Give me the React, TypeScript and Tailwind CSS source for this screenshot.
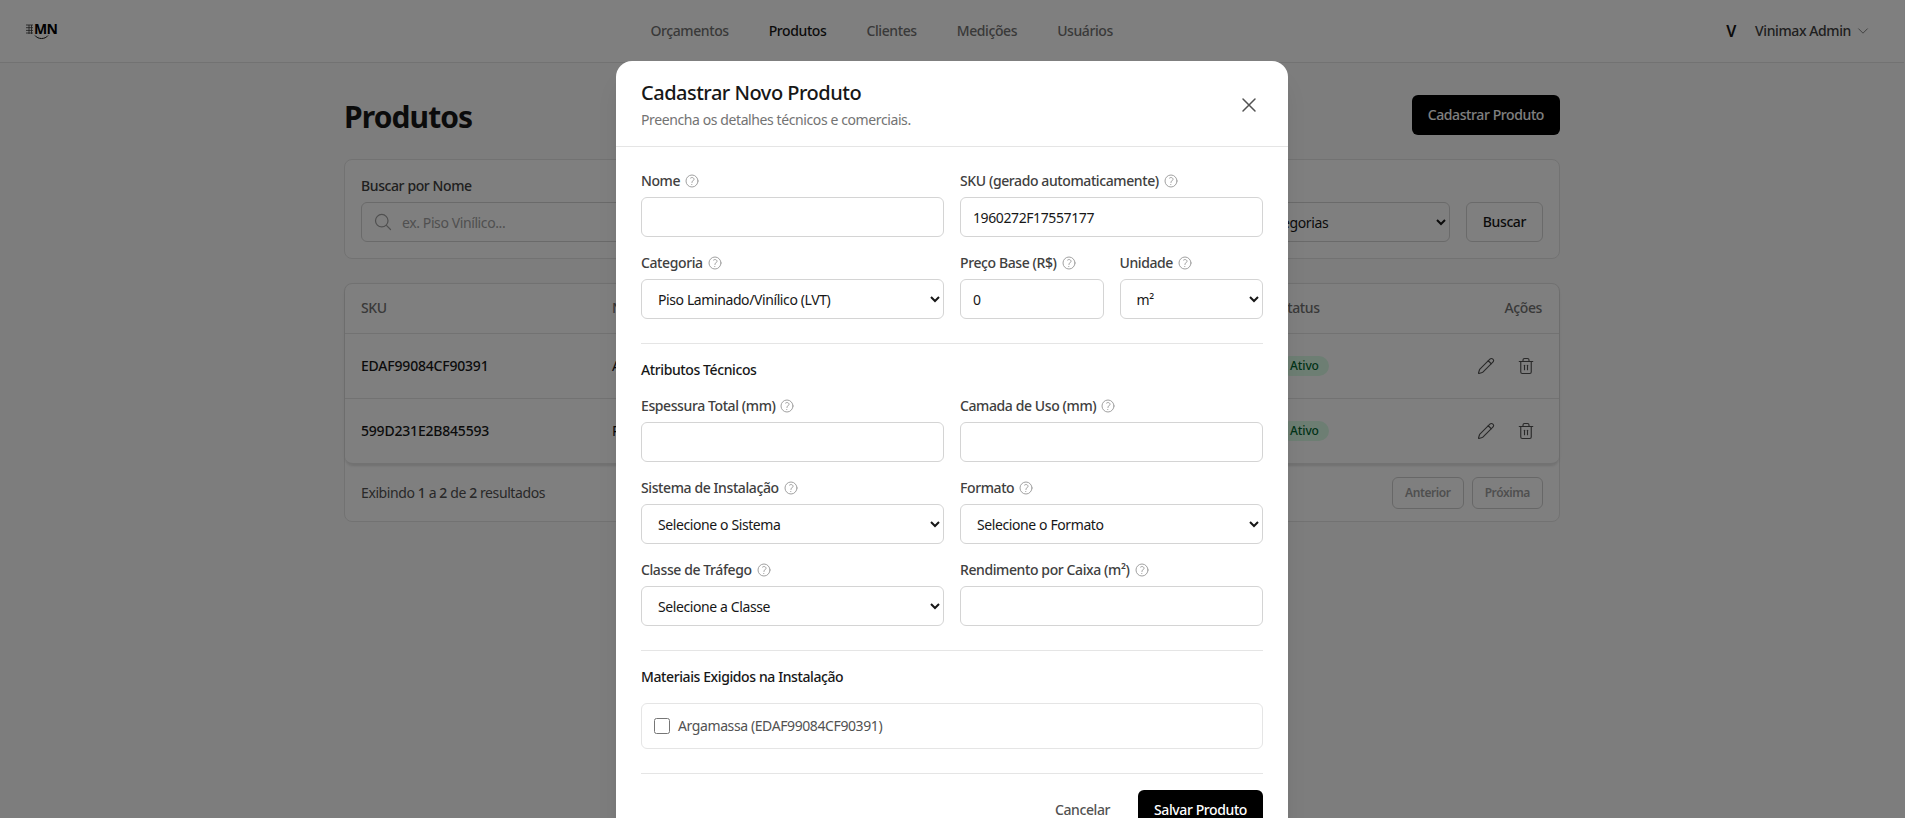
import React from "react";
import {
  HiOutlineXMark,
  HiOutlineChevronDown,
  HiOutlineMagnifyingGlass,
  HiOutlineQuestionMarkCircle,
} from "react-icons/hi2";
import { Pencil, Trash2 } from "lucide-react";

const fieldCls =
  "block h-10 w-full rounded-md border border-neutral-300 bg-white px-3 text-sm text-neutral-900 outline-none";

function Label({ text }: { text: string }) {
  return (
    <div className="mb-1.5 flex h-5 items-center gap-1 text-sm font-medium text-neutral-700">
      <span className="whitespace-nowrap">{text}</span>
      <HiOutlineQuestionMarkCircle className="h-4 w-4 shrink-0 text-neutral-400" />
    </div>
  );
}

function TextField({ label, value = "" }: { label: string; value?: string }) {
  return (
    <div>
      <Label text={label} />
      <input className={fieldCls} defaultValue={value} />
    </div>
  );
}

function SelectField({ label, value }: { label: string; value: string }) {
  return (
    <div>
      <Label text={label} />
      <select className={fieldCls} defaultValue={value}>
        <option>{value}</option>
      </select>
    </div>
  );
}

function ProductRow({ sku, name }: { sku: string; name: string }) {
  return (
    <tr className="h-[65px] border-t border-neutral-200">
      <td className="px-4 text-sm font-medium tracking-[-0.2px] text-neutral-900">{sku}</td>
      <td className="px-4 text-sm text-neutral-900">{name}</td>
      <td className="px-4">
        <div className="flex">
          <span className="flex h-5 items-center rounded-full bg-green-100 px-2.5 text-xs font-medium tracking-[-0.1px] text-green-800">
            Ativo
          </span>
        </div>
      </td>
      <td className="p-0">
        <div className="flex justify-end gap-2.5 pr-[18px]">
          <span className="p-1.5 text-neutral-600">
            <Pencil size={18} strokeWidth={1.5} />
          </span>
          <span className="p-1.5 text-neutral-600">
            <Trash2 size={18} strokeWidth={1.5} />
          </span>
        </div>
      </td>
    </tr>
  );
}

function Logo() {
  return (
    <div className="relative h-4 w-[30px]">
      <svg viewBox="0 0 30 16" className="absolute inset-0 h-4 w-[30px]" fill="none" stroke="#333" strokeWidth="0.8">
        <path d="M0 2H7M0 4.7H7M0 7.4H7M0 10H7M3 2V11M5.5 2V11" />
        <path d="M9 12.5C12 16.5 19 16.5 22 12.5" strokeWidth="1" stroke="#111" />
      </svg>
      <span className="absolute left-[8px] top-[-3px] text-[14px] leading-[18px] font-bold tracking-[-0.8px] text-black">
        MN
      </span>
    </div>
  );
}

export default function App() {
  return (
    <div
      className="relative h-screen overflow-hidden bg-neutral-50 pr-px tracking-[-0.4px]"
      style={{ fontFamily: '"Noto Sans", sans-serif' }}
    >
      <nav className="flex h-[63px] items-center justify-between border-b border-neutral-200 bg-white pl-[26px] pr-[34px]">
        <Logo />
        <div className="mr-[19px] flex items-center gap-10 text-sm font-medium text-neutral-500">
          <span>Orçamentos</span>
          <span className="text-neutral-900">Produtos</span>
          <span>Clientes</span>
          <span>Medições</span>
          <span>Usuários</span>
        </div>
        <div className="flex items-center">
          <span className="mr-[19px] text-base font-semibold text-neutral-900">V</span>
          <span className="text-sm font-medium text-neutral-700">Vinimax Admin</span>
          <HiOutlineChevronDown className="ml-[5px] h-3.5 w-3.5 text-neutral-500" />
        </div>
      </nav>

      <main className="mx-auto max-w-7xl px-8 py-8">
        <div className="mb-6 flex h-10 items-center justify-between">
          <h1 className="pt-[3px] text-3xl font-bold tracking-[-0.9px] text-neutral-900">Produtos</h1>
          <button className="h-10 rounded-md bg-black px-4 text-sm font-medium text-white">
            Cadastrar Produto
          </button>
        </div>

        <div className="mb-6 flex items-end gap-4 rounded-lg border border-neutral-200 bg-white p-4">
          <div className="flex-1">
            <div className="mb-1.5 h-5 text-sm font-medium text-neutral-700">Buscar por Nome</div>
            <div className="relative">
              <HiOutlineMagnifyingGlass className="absolute left-3 top-2.5 h-5 w-5 text-neutral-400" />
              <input
                className="block h-10 w-full rounded-md border border-neutral-300 bg-white pl-10 pr-3 text-sm outline-none placeholder:text-neutral-400"
                placeholder="ex. Piso Vinílico..."
              />
            </div>
          </div>
          <div className="w-[262px]">
            <div className="mb-1.5 h-5 text-sm font-medium text-neutral-700">Categoria</div>
            <select className={fieldCls} defaultValue="Todas as Categorias">
              <option>Todas as Categorias</option>
            </select>
          </div>
          <button className="h-10 rounded-md border border-neutral-300 bg-white px-4 text-sm font-medium text-neutral-900">
            Buscar
          </button>
        </div>

        <div className="rounded-lg border border-neutral-200 bg-white">
          <div className="overflow-hidden rounded-lg border-b-2 border-neutral-200 shadow-sm">
            <table className="w-full table-fixed text-left">
              <colgroup>
                <col className="w-[251px]" />
                <col />
                <col className="w-[195px]" />
                <col className="w-[100px]" />
              </colgroup>
              <thead>
                <tr className="h-[49px] text-sm font-medium text-neutral-500">
                  <th className="px-4 font-medium">SKU</th>
                  <th className="px-4 font-medium">Nome</th>
                  <th className="px-4 font-medium">Status</th>
                  <th className="pl-4 pr-[17px] text-right font-medium">Ações</th>
                </tr>
              </thead>
              <tbody>
                <ProductRow sku="EDAF99084CF90391" name="Argamassa" />
                <ProductRow sku="599D231E2B845593" name="Piso Laminado" />
              </tbody>
            </table>
          </div>
          <div className="flex h-14 items-center justify-between px-4">
            <p className="text-sm text-neutral-600">
              Exibindo <span className="font-medium">1</span> a <span className="font-medium">2</span> de{" "}
              <span className="font-medium">2</span> resultados
            </p>
            <div className="flex gap-2">
              <button className="h-8 rounded-md border border-neutral-400 bg-white px-3 text-xs font-semibold text-neutral-700 opacity-50">
                Anterior
              </button>
              <button className="h-8 rounded-md border border-neutral-400 bg-white px-3 text-xs font-semibold text-neutral-700 opacity-50">
                Próxima
              </button>
            </div>
          </div>
        </div>
      </main>

      <div className="absolute inset-0 flex justify-center bg-black/50 pr-px pt-[61px]">
        <div className="h-fit w-[672px] shrink-0 rounded-2xl bg-white shadow-xl">
          <div className="flex items-center justify-between border-b border-neutral-200 pb-4 pl-[25px] pr-[27px] pt-[18px]">
            <div>
              <h2 className="text-xl leading-7 font-medium tracking-[-0.5px] text-neutral-900">
                Cadastrar Novo Produto
              </h2>
              <p className="mt-[3px] text-sm text-neutral-500">Preencha os detalhes técnicos e comerciais.</p>
            </div>
            <HiOutlineXMark className="h-6 w-6 text-neutral-600" />
          </div>
          <div className="px-[25px] pb-4 pt-6">
            <div className="grid grid-cols-2 gap-4">
              <TextField label="Nome" />
              <TextField label="SKU (gerado automaticamente)" value="1960272F17557177" />
              <SelectField label="Categoria" value="Piso Laminado/Vinílico (LVT)" />
              <div className="grid grid-cols-2 gap-4">
                <TextField label="Preço Base (R$)" value="0" />
                <SelectField label="Unidade" value="m²" />
              </div>
            </div>

            <div className="mt-6 border-t border-neutral-200 pt-4">
              <h3 className="mb-4 h-5 text-sm font-medium text-neutral-900">Atributos Técnicos</h3>
              <div className="grid grid-cols-2 gap-4">
                <TextField label="Espessura Total (mm)" />
                <TextField label="Camada de Uso (mm)" />
                <SelectField label="Sistema de Instalação" value="Selecione o Sistema" />
                <SelectField label="Formato" value="Selecione o Formato" />
                <SelectField label="Classe de Tráfego" value="Selecione a Classe" />
                <TextField label="Rendimento por Caixa (m²)" />
              </div>
            </div>

            <div className="mt-6 border-t border-neutral-200 pt-4">
              <h3 className="mb-4 h-5 text-sm font-medium text-neutral-900">Materiais Exigidos na Instalação</h3>
              <div className="flex items-center gap-2 rounded-md border border-neutral-200 p-3">
                <input type="checkbox" className="h-4 w-4" />
                <span className="text-sm text-neutral-600">Argamassa (EDAF99084CF90391)</span>
              </div>
            </div>

            <div className="mt-6 flex items-center justify-end gap-3 border-t border-neutral-200 pt-4">
              <button className="h-10 px-4 text-sm font-medium text-neutral-600">Cancelar</button>
              <button className="h-10 rounded-md bg-black px-4 text-sm font-medium text-white">Salvar Produto</button>
            </div>
          </div>
        </div>
      </div>
    </div>
  );
}
